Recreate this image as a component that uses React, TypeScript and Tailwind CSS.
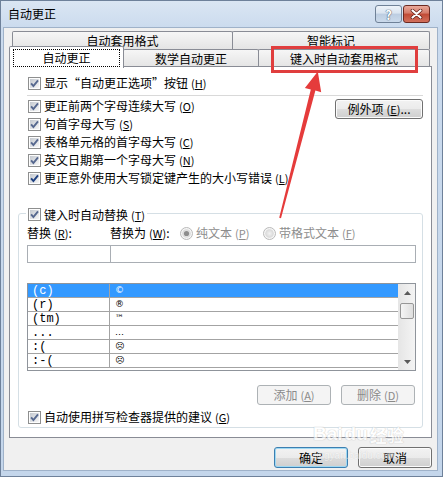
import React from "react";

const FONT = "font-['Noto_Sans_CJK_SC','Liberation_Sans',sans-serif]";

function CheckBox({ dark = false }: { dark?: boolean }) {
  const c = dark ? "#1d3f80" : "#56688f";
  return (
    <svg width="13" height="13" viewBox="0 0 13 13" className="shrink-0">
      <defs>
        <linearGradient id="cbg" x1="0" y1="0" x2="1" y2="1">
          <stop offset="0" stopColor="#c3c8cf" />
          <stop offset="1" stopColor="#f7f7f7" />
        </linearGradient>
      </defs>
      <rect x="0.5" y="0.5" width="12" height="12" fill="#fdfdfd" stroke="#8e8f8f" />
      <rect x="2" y="2" width="9" height="9" fill="url(#cbg)" />
      <path d="M3.1 6.4 L5.4 9.1 L10 3.3" fill="none" stroke={c} strokeWidth="1.9" />
    </svg>
  );
}

function Radio({ checked = false }: { checked?: boolean }) {
  return (
    <svg width="13" height="13" viewBox="0 0 13 13" className="shrink-0">
      <defs>
        <radialGradient id="rg" cx="0.5" cy="0.5" r="0.6">
          <stop offset="0" stopColor="#f2f2f2" />
          <stop offset="1" stopColor="#d2d2d2" />
        </radialGradient>
      </defs>
      <circle cx="6.5" cy="6.5" r="6" fill="#f6f6f6" stroke="#b9b9b9" />
      <circle cx="6.5" cy="6.5" r="4.3" fill="url(#rg)" />
      {checked && <circle cx="6.5" cy="6.5" r="2.6" fill="#8d8d8d" />}
    </svg>
  );
}

function U({ c }: { c: string }) {
  return (
    <span className="ml-[3px] text-[11px]">
      (<span className="underline underline-offset-[1px]">{c}</span>)
    </span>
  );
}

function CheckRow({ text, k, dark = false }: { text: string; k: string; dark?: boolean }) {
  return (
    <div className="flex h-[18px] items-center gap-[3px]">
      <CheckBox dark={dark} />
      <span className="whitespace-nowrap">
        {text}
        <U c={k} />
      </span>
    </div>
  );
}

function Btn({ children, kind = "normal" }: { children: React.ReactNode; kind?: "normal" | "disabled" | "default" }) {
  if (kind === "disabled") {
    return (
      <div className="flex h-full w-full items-center justify-center rounded-[3px] border border-[#adb2b5] bg-[#f4f4f4] text-[#8a8a8a] whitespace-nowrap">
        {children}
      </div>
    );
  }
  if (kind === "default") {
    return (
      <div className="flex h-full w-full items-center justify-center rounded-[3px] border border-[#3c7fb1] bg-[linear-gradient(#f2f2f2_0%,#ebebeb_50%,#dddddd_51%,#cfcfcf_100%)] shadow-[inset_0_0_0_1px_#9fd9f3] whitespace-nowrap">
        {children}
      </div>
    );
  }
  return (
    <div className="flex h-full w-full items-center justify-center rounded-[3px] border border-[#707070] bg-[linear-gradient(#f2f2f2_0%,#ebebeb_50%,#dddddd_51%,#cfcfcf_100%)] shadow-[inset_0_0_0_1px_#fbfbfb] whitespace-nowrap">
      {children}
    </div>
  );
}

const listRows = [
  { a: "(c)", b: "©" },
  { a: "(r)", b: "®" },
  { a: "(tm)", b: "™" },
  { a: "...", b: "…" },
  { a: ":(", b: "☹" },
  { a: ":-(", b: "☹" },
];

export default function App() {
  return (
    <div
      className={`relative h-[477px] w-[443px] overflow-hidden bg-[linear-gradient(#dbe6f3_0px,#cbdbee_28px,#c4d6eb_100%)] shadow-[inset_0_0_0_1px_#6e819a] ${FONT} text-[12px] leading-none text-black`}
    >
      {/* title bar */}
      <div className="flex h-[28px] items-center justify-between pl-[8px] pr-[13px]">
        <span className="text-[12px] text-black">自动更正</span>
        <div className="flex gap-px">
          <div className="flex h-[18px] w-[27px] items-center justify-center rounded-[3px] border border-[#6f8197] bg-[linear-gradient(#eef3f9_0%,#d9e4f0_45%,#bccde1_50%,#cbdaeb_100%)]">
            <span className="text-[13px] font-bold text-white [text-shadow:0_0_1px_#3b4b60,0_0_1px_#3b4b60]">?</span>
          </div>
          <div className="flex h-[18px] w-[27px] items-center justify-center rounded-[3px] border border-[#6b2a22] bg-[linear-gradient(#e9a99b_0%,#d47a68_45%,#c04a35_50%,#d2705c_100%)]">
            <svg width="13" height="10" viewBox="0 0 13 10">
              <path d="M2.5 1.5 L10.5 8.5 M10.5 1.5 L2.5 8.5" stroke="#5c1a12" strokeWidth="3.6" strokeLinecap="round" />
              <path d="M2.5 1.5 L10.5 8.5 M10.5 1.5 L2.5 8.5" stroke="#ffffff" strokeWidth="2.2" strokeLinecap="round" />
            </svg>
          </div>
        </div>
      </div>

      {/* body */}
      <div className="ml-[4px] flex h-[442px] w-[433px] flex-col bg-[#f0f0f0] px-[5px] pt-[3px] shadow-[0_0_0_1px_#9fb2c9]">
        {/* tab row 1 */}
        <div className="ml-[3px] flex h-[18px]">
          <div className="flex w-[221px] items-center justify-center rounded-t-[2px] border border-b-0 border-[#898c95] bg-[linear-gradient(#f6f6f6,#e4e4e4)] pt-px">
            自动套用格式
          </div>
          <div className="-ml-px flex w-[198px] items-center justify-center rounded-t-[2px] border border-b-0 border-[#898c95] bg-[linear-gradient(#f6f6f6,#e4e4e4)] pt-px">
            智能标记
          </div>
        </div>
        {/* tab row 2 */}
        <div className="flex h-[18px] items-start">
          <div className="relative z-10 -mt-[3px] flex h-[22px] w-[115px] justify-center rounded-t-[2px] border border-b-0 border-[#898c95] bg-white pt-[2px]">
            <div className="flex h-[18px] w-[107px] items-center justify-center border border-dotted border-black">
              自动更正
            </div>
          </div>
          <div className="-ml-px flex h-[18px] w-[136px] items-center justify-center rounded-t-[2px] border border-b-0 border-[#898c95] bg-[linear-gradient(#f6f6f6,#e4e4e4)]">
            数学自动更正
          </div>
          <div className="-ml-px flex h-[18px] w-[172px] items-center justify-center rounded-t-[2px] border border-b-0 border-[#898c95] bg-[linear-gradient(#f6f6f6,#e4e4e4)]">
            键入时自动套用格式
          </div>
        </div>

        {/* panel */}
        <div className="relative -mt-px flex h-[372px] flex-col border border-[#898c95] bg-white pt-[7px]">
          <div className="pl-[18px]">
            <CheckRow text="显示“自动更正选项”按钮" k="H" />
          </div>
          <div className="mt-[3px] ml-[17px] mr-[8px] h-px bg-[#d9d9d9]" />
          <div className="mt-px flex">
            <div className="flex flex-col pl-[18px]">
              <CheckRow text="更正前两个字母连续大写" k="O" />
              <CheckRow text="句首字母大写" k="S" />
              <CheckRow text="表格单元格的首字母大写" k="C" />
              <CheckRow text="英文日期第一个字母大写" k="N" />
              <CheckRow text="更正意外使用大写锁定键产生的大小写错误" k="L" dark />
            </div>
            <div className="ml-auto mr-[8px] mt-[2px] h-[20px] w-[88px]">
              <Btn>
                例外项<U c="E" />...
              </Btn>
            </div>
          </div>

          {/* group box */}
          <div className="mx-[8px] mt-[26px] flex h-[215px] flex-col rounded-[3px] border border-[#d5dfe5]">
            <div className="-mt-[8px] ml-[7px] flex h-[17px] items-center gap-[3px] self-start bg-white px-[2px]">
              <CheckBox />
              <span className="whitespace-nowrap">
                键入时自动替换<U c="T" />
              </span>
            </div>
            <div className="mt-[2px] flex h-[16px] items-center pl-[8px]">
              <span className="w-[83px] whitespace-nowrap">
                替换<U c="R" />:
              </span>
              <span className="w-[70px] whitespace-nowrap">
                替换为<U c="W" />:
              </span>
              <div className="flex w-[83px] items-center gap-[3px] text-[#8d8d8d]">
                <Radio checked />
                <span className="whitespace-nowrap">
                  纯文本<U c="P" />
                </span>
              </div>
              <div className="flex items-center gap-[3px] text-[#8d8d8d]">
                <Radio />
                <span className="whitespace-nowrap">
                  带格式文本<U c="F" />
                </span>
              </div>
            </div>
            <div className="mt-[4px] flex h-[18px] pl-[8px] pr-[6px]">
              <div className="h-full w-[84px] border border-[#a9aeb4] bg-white" />
              <div className="-ml-px h-full flex-1 border border-[#a9aeb4] bg-white" />
            </div>

            {/* list */}
            <div className="ml-[8px] mr-[6px] mt-[20px] flex h-[88px] border border-[#8f949b] bg-white">
              <div className="flex flex-1 flex-col">
                {listRows.map((r, i) => (
                  <div
                    key={i}
                    className={
                      i === 0
                        ? "flex h-[14px] border-b border-[#a3a3a3] bg-[#3399ff] text-white"
                        : "flex h-[14px] border-b border-[#a3a3a3]"
                    }
                  >
                    <div className="flex w-[82px] items-center border-r border-[#a3a3a3] pl-[4px] font-['Liberation_Mono',monospace] text-[12px]">
                      {r.a}
                    </div>
                    <div className="flex items-center pl-[5px] font-['DejaVu_Sans',sans-serif] text-[9px]">
                      {r.b}
                    </div>
                  </div>
                ))}
              </div>
              <div className="flex w-[17px] flex-col border-l border-[#e6e6e6] bg-[linear-gradient(to_right,#e6e6e6,#f4f4f4)]">
                <div className="flex h-[17px] items-center justify-center">
                  <svg width="7" height="4" viewBox="0 0 7 4">
                    <path d="M0 4 L3.5 0 L7 4 Z" fill="#5a5a5a" />
                  </svg>
                </div>
                <div className="mx-px mt-[2px] h-[16px] rounded-[2px] border border-[#979797] bg-[linear-gradient(to_right,#f5f5f5,#dedede)]" />
                <div className="flex-1" />
                <div className="flex h-[17px] items-center justify-center">
                  <svg width="7" height="4" viewBox="0 0 7 4">
                    <path d="M0 0 L3.5 4 L7 0 Z" fill="#5a5a5a" />
                  </svg>
                </div>
              </div>
            </div>

            <div className="mr-[7px] mt-[14px] flex h-[20px] justify-end gap-[10px]">
              <div className="w-[74px]">
                <Btn kind="disabled">
                  添加<U c="A" />
                </Btn>
              </div>
              <div className="w-[74px]">
                <Btn kind="disabled">
                  删除<U c="D" />
                </Btn>
              </div>
            </div>
            <div className="mt-[4px] flex h-[16px] items-center gap-[3px] pl-[9px]">
              <CheckBox />
              <span className="whitespace-nowrap">
                自动使用拼写检查器提供的建议<U c="G" />
              </span>
            </div>
          </div>
        </div>

        {/* bottom buttons */}
        <div className="mt-[9px] flex h-[21px] justify-end gap-[10px]">
          <div className="w-[74px]">
            <Btn kind="default">确定</Btn>
          </div>
          <div className="w-[74px]">
            <Btn>取消</Btn>
          </div>
        </div>
      </div>

      {/* Baidu watermark */}
      <div className="pointer-events-none absolute left-[313px] top-[424px] flex items-end gap-[2px] opacity-70">
        <span className="font-['Liberation_Sans',sans-serif] text-[19px] font-bold text-white [text-shadow:0_0_1px_#b8b8b8,0_0_1px_#b8b8b8]">
          Bai
        </span>
        <span className="font-['Liberation_Sans',sans-serif] text-[19px] font-bold text-white [text-shadow:0_0_1px_#b8b8b8,0_0_1px_#b8b8b8]">
          du
        </span>
        <span className="text-[17px] font-bold text-white [text-shadow:0_0_1px_#b8b8b8,0_0_1px_#b8b8b8]">
          经验
        </span>
      </div>
      <div className="pointer-events-none absolute left-[314px] top-[451px] font-['Liberation_Sans',sans-serif] text-[10px] text-white opacity-50 [text-shadow:0_0_1px_#a0a0a0]">
        jingyan.baidu.com
      </div>

      {/* red highlight overlay */}
      <div className="pointer-events-none absolute left-[271px] top-[46px] h-[27px] w-[147px] border-[3px] border-[#e03e3e]" />
      <svg className="pointer-events-none absolute left-0 top-0" width="443" height="477" viewBox="0 0 443 477">
        <polygon
          points="317.8,71.6 321.2,92.2 315.4,90.6 281,218.2 279.2,217.8 310.8,89.4 304.9,88"
          fill="#e53b3b"
        />
      </svg>
    </div>
  );
}
